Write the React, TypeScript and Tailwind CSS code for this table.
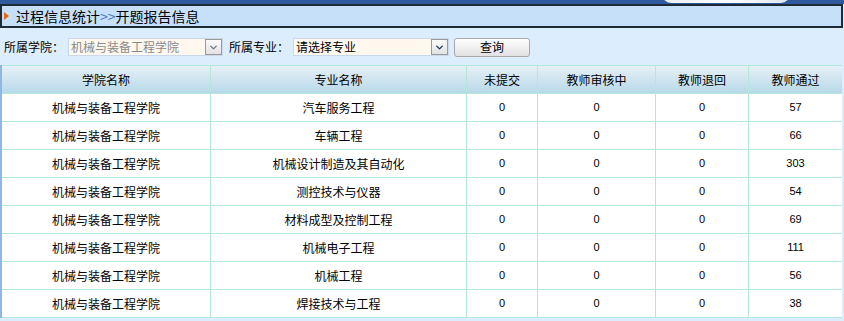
import { ChevronDown } from "lucide-react"

const rows = [
  { major: "汽车服务工程", pass: 57 },
  { major: "车辆工程", pass: 66 },
  { major: "机械设计制造及其自动化", pass: 303 },
  { major: "测控技术与仪器", pass: 54 },
  { major: "材料成型及控制工程", pass: 69 },
  { major: "机械电子工程", pass: 111 },
  { major: "机械工程", pass: 56 },
  { major: "焊接技术与工程", pass: 38 },
]

const headers = ["学院名称", "专业名称", "未提交", "教师审核中", "教师退回", "教师通过"]
const widths = ["w-[209px]", "w-[256px]", "w-[71px]", "w-[118px]", "w-[93px]", "flex-1"]

function FakeSelect({ text, muted, width }: { text: string; muted?: boolean; width: string }) {
  return (
    <div className={`${width} h-[18px] flex items-stretch border border-[#c9d9ea] bg-[#fff8ee]`}>
      <span className={`flex-1 pl-[2px] leading-[16px] text-[12px] ${muted ? "text-[#8a8a8a]" : "text-black"}`}>
        {text}
      </span>
      <span className="w-[17px] flex items-center justify-center border border-[#9a9a9a] bg-gradient-to-b from-[#fbfbfb] to-[#e2e2e2]">
        <ChevronDown size={11} strokeWidth={3} className={muted ? "text-[#6b7a8c]" : "text-[#1c3660]"} />
      </span>
    </div>
  )
}

export default function App() {
  return (
    <div className="relative w-[844px] h-[321px] overflow-hidden bg-[#dcedfd] font-['Noto_Sans_CJK_SC',sans-serif] text-[12px] text-black">
      {/* top banner strip */}
      <div className="relative h-[4px] bg-[#2f5a9d]">
        <div className="absolute left-[662px] top-[-6px] w-[128px] h-[9px] rounded-b-[40px] bg-gradient-to-r from-[#e8eef6] via-white to-[#dfe7f1]" />
      </div>

      {/* title */}
      <div className="h-[24px] mr-[1px] flex items-center border-2 border-[#1e2a35] bg-[#c6e0fa]">
        <span className="ml-[2px] w-0 h-0 border-y-[4px] border-y-transparent border-l-[5px] border-l-[#e9660f]" />
        <span className="ml-[7px] text-[14px] leading-none">
          过程信息统计<span className="text-[#3d74c9]">&gt;&gt;</span>开题报告信息
        </span>
      </div>

      {/* filters */}
      <div className="h-[37px] flex items-center pl-[4px] pt-[1px]">
        <span className="w-[64px]">所属学院：</span>
        <FakeSelect text="机械与装备工程学院" muted width="w-[155px]" />
        <span className="ml-[6px] w-[64px]">所属专业：</span>
        <FakeSelect text="请选择专业" width="w-[156px]" />
        <button className="ml-[5px] w-[76px] h-[19px] rounded-[3px] border border-[#a9a9a9] bg-gradient-to-b from-white to-[#e1e1e1] text-[12px] leading-none">
          查询
        </button>
      </div>

      {/* table */}
      <div className="border-l-2 border-[#8fb6e4] mr-[2px]">
        <div className="flex h-[28px] bg-gradient-to-b from-[#e6f0f6] to-[#b8d9e9] border-t border-[#b2e8d8]">
          {headers.map((h, i) => (
            <div
              key={h}
              className={`${widths[i]} flex items-center justify-center ${i < 5 ? "border-r border-[#b2e8d8]" : ""}`}
            >
              {h}
            </div>
          ))}
        </div>
        {rows.map((r) => (
          <div key={r.major} className="flex h-[28px] bg-white border-t border-[#b2e8d8]">
            <div className="w-[209px] flex items-center justify-center border-r border-[#b2e8d8]">机械与装备工程学院</div>
            <div className="w-[256px] flex items-center justify-center border-r border-[#b2e8d8]">{r.major}</div>
            {[0, 0, 0].map((v, i) => (
              <div
                key={i}
                className={`${widths[i + 2]} flex items-center justify-center border-r border-[#b2e8d8] font-['Liberation_Sans',sans-serif] text-[11px]`}
              >
                {v}
              </div>
            ))}
            <div className="flex-1 flex items-center justify-center font-['Liberation_Sans',sans-serif] text-[11px]">
              {r.pass}
            </div>
          </div>
        ))}
        <div className="border-t border-[#b2e8d8]" />
      </div>
    </div>
  )
}
